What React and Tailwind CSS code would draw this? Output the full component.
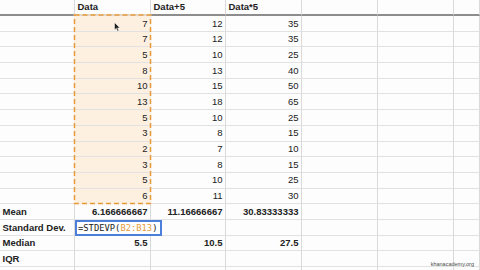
import React from 'react';

const colB = [7, 7, 5, 8, 10, 13, 5, 3, 2, 3, 5, 6];
const colC = [12, 12, 10, 13, 15, 18, 10, 8, 7, 8, 10, 11];
const colD = [35, 35, 25, 40, 50, 65, 25, 15, 10, 15, 25, 30];

// column widths, so the grid lines land on 75 / 151 / 226 / 302 / 378 / 454
const widths = ['w-[75px]', 'w-[76px]', 'w-[75px]', 'w-[76px]', 'w-[76px]', 'w-[76px]', 'flex-1'];

const Row = ({ cells = [], header = false }) => (
  <div className={`flex shrink-0 ${header ? 'h-[16px]' : 'h-[15.7px]'}`}>
    {widths.map((w, i) => {
      const c = cells[i] || {};
      return (
        <div
          key={i}
          className={`${w} shrink-0 flex items-center whitespace-nowrap border-r border-r-[#dadada] ${
            header ? 'border-b-2 border-b-[#8d8d8d]' : 'border-b border-b-[#e2e2e2]'
          } ${c.peach ? 'bg-[#fdf0e1]' : ''} ${c.right ? 'justify-end pr-[2.5px]' : 'pl-[2.5px]'} ${
            c.bold ? 'font-bold' : ''
          } ${c.rel ? 'relative' : ''}`}
        >
          {c.content}
        </div>
      );
    })}
  </div>
);

const FormulaEditor = () => (
  <div className="absolute left-0 top-0 z-10 flex h-[16px] w-[87px] items-center border-2 border-[#4c7fd9] bg-white pl-[1px] font-['DejaVu_Sans_Mono',monospace] text-[8.8px] font-normal text-[#222]">
    =STDEVP(<span className="text-[#e59b3b]">B2:B13</span>)
  </div>
);

export default function App() {
  return (
    <div className="relative h-[270px] w-[480px] overflow-hidden bg-[#fdfdfd] font-['Liberation_Sans',Arial,sans-serif] text-[9.5px] leading-none text-[#222]">
      <div className="flex flex-col">
        <Row
          header
          cells={[
            {},
            { content: 'Data', bold: true },
            { content: 'Data+5', bold: true },
            { content: 'Data*5', bold: true },
          ]}
        />

        {colB.map((v, i) => (
          <Row
            key={i}
            cells={[
              {},
              { content: v, right: true, peach: true },
              { content: colC[i], right: true },
              { content: colD[i], right: true },
            ]}
          />
        ))}

        <Row
          cells={[
            { content: 'Mean', bold: true },
            { content: '6.166666667', right: true, bold: true },
            { content: '11.16666667', right: true, bold: true },
            { content: '30.83333333', right: true, bold: true },
          ]}
        />
        <Row
          cells={[
            { content: 'Standard Dev.', bold: true },
            { content: <FormulaEditor />, rel: true },
          ]}
        />
        <Row
          cells={[
            { content: 'Median', bold: true },
            { content: '5.5', right: true, bold: true },
            { content: '10.5', right: true, bold: true },
            { content: '27.5', right: true, bold: true },
          ]}
        />
        <Row cells={[{ content: 'IQR', bold: true }]} />
        <Row />
      </div>

      {/* copy selection B2:B13 */}
      <svg className="absolute left-[73px] top-[13px]" width="80" height="193" viewBox="0 0 80 193">
        <rect x="1.5" y="2" width="76" height="188.5" fill="none" stroke="#fdf0e1" strokeWidth="1.5" />
        <rect x="1.5" y="2" width="76" height="188.5" fill="none" stroke="#e69c3c" strokeWidth="1.5" strokeDasharray="5 3" />
      </svg>

      {/* mouse pointer */}
      <svg className="absolute left-[114px] top-[22px]" width="7" height="10" viewBox="0 0 7 10">
        <path d="M0.5 0.5 L0.5 8 L2.3 6.3 L3.6 9.2 L4.8 8.7 L3.6 5.9 L6 5.9 Z" fill="#1e1e1e" stroke="#fff" strokeWidth="0.5" />
      </svg>

      <div className="absolute bottom-[3px] right-[6px] text-[5.5px] text-[#4a4a4a] [text-shadow:0_0_1px_#fff]">
        khanacademy.org
      </div>
    </div>
  );
}
